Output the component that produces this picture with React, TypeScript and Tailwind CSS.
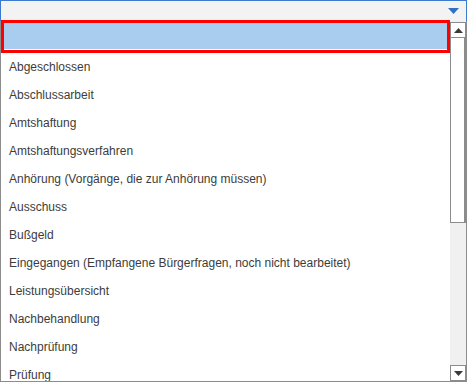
import React from "react";

const items = [
  "",
  "Abgeschlossen",
  "Abschlussarbeit",
  "Amtshaftung",
  "Amtshaftungsverfahren",
  "Anhörung (Vorgänge, die zur Anhörung müssen)",
  "Ausschuss",
  "Bußgeld",
  "Eingegangen (Empfangene Bürgerfragen, noch nicht bearbeitet)",
  "Leistungsübersicht",
  "Nachbehandlung",
  "Nachprüfung",
  "Prüfung",
];

function Arrow({ up, className }: { up?: boolean; className: string }) {
  return (
    <svg width="9" height="5" viewBox="0 0 9 5" className={className}>
      <path d={up ? "M0 5 L4.5 0 L9 5 Z" : "M0 0 L9 0 L4.5 5 Z"} fill="currentColor" />
    </svg>
  );
}

export default function App() {
  return (
    <div
      className="relative h-[382px] w-[467px] overflow-hidden bg-white"
      style={{ fontFamily: '"Liberation Sans", Arial, sans-serif' }}
    >
      {/* combobox header */}
      <div className="flex h-[21px] items-center justify-end border-x border-t border-[#3a7bd0] bg-[#f3f3f3] pr-[7px]">
        <svg width="11" height="6" viewBox="0 0 11 6" className="text-[#2f6fc6]">
          <path d="M0 0 L11 0 L5.5 6 Z" fill="currentColor" />
        </svg>
      </div>

      {/* dropdown list */}
      <div className="flex h-[361px] border-x border-b border-[#8c8c8c] bg-white">
        <div className="flex flex-1 flex-col overflow-hidden pt-[1px]">
          {items.map((item, i) => (
            <div
              key={i}
              className={
                i === 0
                  ? "flex h-[28px] shrink-0 items-center border border-white bg-[#a9cdee] px-[8px] text-[12px] text-[#333]"
                  : "flex h-[28px] shrink-0 items-center whitespace-nowrap px-[8px] pt-[5px] text-[12px] text-[#3c3c3c]"
              }
            >
              {item}
            </div>
          ))}
        </div>

        {/* scrollbar */}
        <div className="flex w-[16px] flex-col bg-[#f0f0f0] pt-[1px]">
          <div className="flex h-[16px] items-center justify-center border border-[#8c8c8c] bg-white">
            <Arrow up className="text-[#3a3a3a]" />
          </div>
          <div className="h-[185px] border-x border-b border-[#8c8c8c] border-r-2 bg-white" />
          <div className="flex-1" />
          <div className="flex h-[16px] items-center justify-center border border-[#8c8c8c] bg-white">
            <Arrow className="text-[#3a3a3a]" />
          </div>
        </div>
      </div>

      {/* annotation frame */}
      <div className="absolute left-[1px] top-[20px] h-[33px] w-[449px] border-[3px] border-[#ff0000]" />
    </div>
  );
}
